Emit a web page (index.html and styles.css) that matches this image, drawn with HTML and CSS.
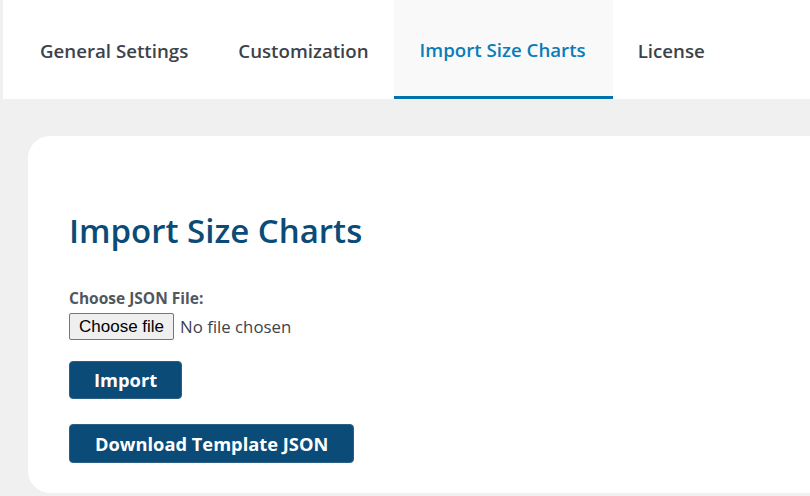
FILE: index.html
```html
<!DOCTYPE html>
<html lang="en">
<head>
<meta charset="utf-8">
<title>Import Size Charts</title>
<link rel="stylesheet" href="styles.css">
</head>
<body>
<nav class="tabs">
  <a class="tab" href="#">General Settings</a>
  <a class="tab" href="#">Customization</a>
  <a class="tab tab-active" href="#">Import Size Charts</a>
  <a class="tab" href="#">License</a>
</nav>
<main class="card">
  <h1 class="title">Import Size Charts</h1>
  <form class="import-form">
    <div class="field">
      <label class="field-label" for="json-file">Choose JSON File:</label>
      <label class="file-input">
        <input id="json-file" class="file-native" type="file" accept=".json">
        <span class="file-button">Choose file</span>
        <span class="file-status">No file chosen</span>
      </label>
    </div>
    <button class="btn" type="button">Import</button>
    <button class="btn" type="button">Download Template JSON</button>
  </form>
</main>
</body>
</html>
```
FILE: styles.css
```css
html, body {
  margin: 0;
  padding: 0;
}
body {
  background: #f0f0f1;
  font-family: "Open Sans", "Noto Sans", sans-serif;
  overflow: hidden;
  height: 496px;
}
.tabs {
  display: flex;
  align-items: stretch;
  height: 99px;
  margin-left: 3px;
  padding-left: 12px;
  background: #ffffff;
}
.tab {
  display: flex;
  align-items: center;
  padding: 5px 25px 0 25px;
  font-size: 18.7px;
  font-weight: 600;
  color: #3c434a;
  text-decoration: none;
  border-bottom: 3px solid transparent;
  box-sizing: border-box;
}
.tab-active {
  background: #f9f9f9;
  color: #0a7cba;
  border-bottom-color: #0073aa;
  padding-left: 26px;
  padding-right: 27px;
  padding-top: 2px;
}
.card {
  margin: 37px -60px 0 28px;
  height: 357px;
  box-sizing: border-box;
  background: #ffffff;
  border-radius: 22px;
  padding: 70px 41px 0;
}
.title {
  margin: 0 0 32px;
  font-size: 33px;
  font-weight: 600;
  color: #0a4b78;
  line-height: 50px;
}
.import-form {
  display: flex;
  flex-direction: column;
  align-items: flex-start;
  gap: 21px;
}
.field {
  display: flex;
  flex-direction: column;
  gap: 4px;
}
.field-label {
  font-size: 15.5px;
  font-weight: 700;
  color: #50575e;
  line-height: 21px;
}
.file-input {
  display: flex;
  align-items: center;
  gap: 6px;
  cursor: pointer;
}
.file-native {
  display: none;
}
.file-button {
  font-family: "Liberation Sans", Arial, sans-serif;
  font-size: 17px;
  color: #000;
  background: #efefef;
  border: 1px solid #767676;
  border-radius: 2px;
  padding: 2px 9px;
  line-height: 21px;
}
.file-status {
  font-size: 16.8px;
  color: #3c434a;
}
.btn {
  font-family: "Open Sans", "Noto Sans", sans-serif;
  font-size: 18.3px;
  font-weight: 700;
  color: #ffffff;
  background: #0a4b78;
  border: 1px solid #2c5f85;
  border-radius: 4px;
  padding: 0 24px;
  height: 38px;
  line-height: 36px;
  cursor: pointer;
}
.btn + .btn {
  margin-top: 4px;
  height: 39px;
  padding: 0 25px;
}
```
